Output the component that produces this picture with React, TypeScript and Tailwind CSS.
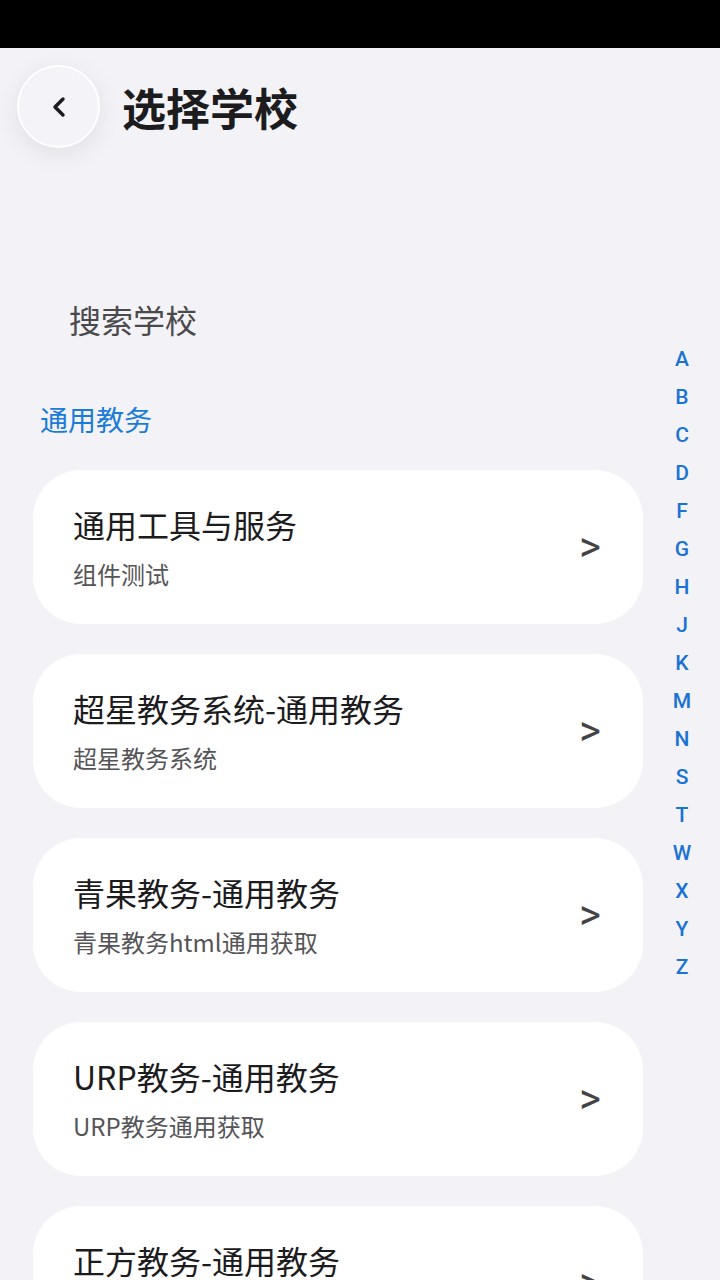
import { ChevronLeft } from "lucide-react";

const schools = [
  { name: "通用工具与服务", desc: "组件测试" },
  { name: "超星教务系统-通用教务", desc: "超星教务系统" },
  { name: "青果教务-通用教务", desc: "青果教务html通用获取" },
  { name: "URP教务-通用教务", desc: "URP教务通用获取" },
  { name: "正方教务-通用教务", desc: "正方教务通用获取" },
];

const letters = ["A", "B", "C", "D", "F", "G", "H", "J", "K", "M", "N", "S", "T", "W", "X", "Y", "Z"];

export default function App() {
  return (
    <div
      className="relative h-[1280px] overflow-hidden bg-[#f3f2f7]"
      style={{ fontFamily: '"Noto Sans CJK SC", Roboto, "Noto Sans", sans-serif' }}
    >
      <div className="h-12 bg-black" />

      <div className="flex items-center gap-[22px] pl-[17px] pt-[17px]">
        <button className="flex h-[83px] w-[83px] items-center justify-center rounded-full border-2 border-white bg-[#f4f3f8] shadow-[0_6px_24px_rgba(0,0,0,0.08)]">
          <ChevronLeft className="h-8 w-8 text-[#1c1c1e]" strokeWidth={2.6} />
        </button>
        <h1 className="text-[44px] font-bold leading-none text-[#1c1c1e]">选择学校</h1>
      </div>

      <div className="pl-[69px] pt-[155px] text-[32px] leading-none text-[#4a4a4c]">搜索学校</div>

      <div className="pl-10 pt-[70px] text-[28px] leading-none text-[#1a7cd8]">通用教务</div>

      <div className="ml-[33px] mt-[37px] flex w-[610px] flex-col gap-[30px]">
        {schools.map((s) => (
          <div key={s.name} className="flex h-[154px] items-center rounded-[48px] bg-white pl-10 pr-[42px]">
            <div className="flex flex-1 flex-col gap-[22px] self-start pt-[38px]">
              <div className="text-[32px] leading-none text-[#1c1c1e]">{s.name}</div>
              <div className="text-[24px] leading-none text-[#555558]">{s.desc}</div>
            </div>
            <span
              className="text-[42px] leading-none text-[#444446]"
              style={{ fontFamily: "Roboto, sans-serif" }}
            >
              &gt;
            </span>
          </div>
        ))}
      </div>

      <div
        className="absolute right-[20px] top-[347px] flex w-[36px] flex-col items-center gap-[14px]"
        style={{ fontFamily: "Roboto, sans-serif" }}
      >
        {letters.map((l) => (
          <span key={l} className="text-[21px] font-medium leading-[24px] text-[#1a73d4]">
            {l}
          </span>
        ))}
      </div>
    </div>
  );
}
